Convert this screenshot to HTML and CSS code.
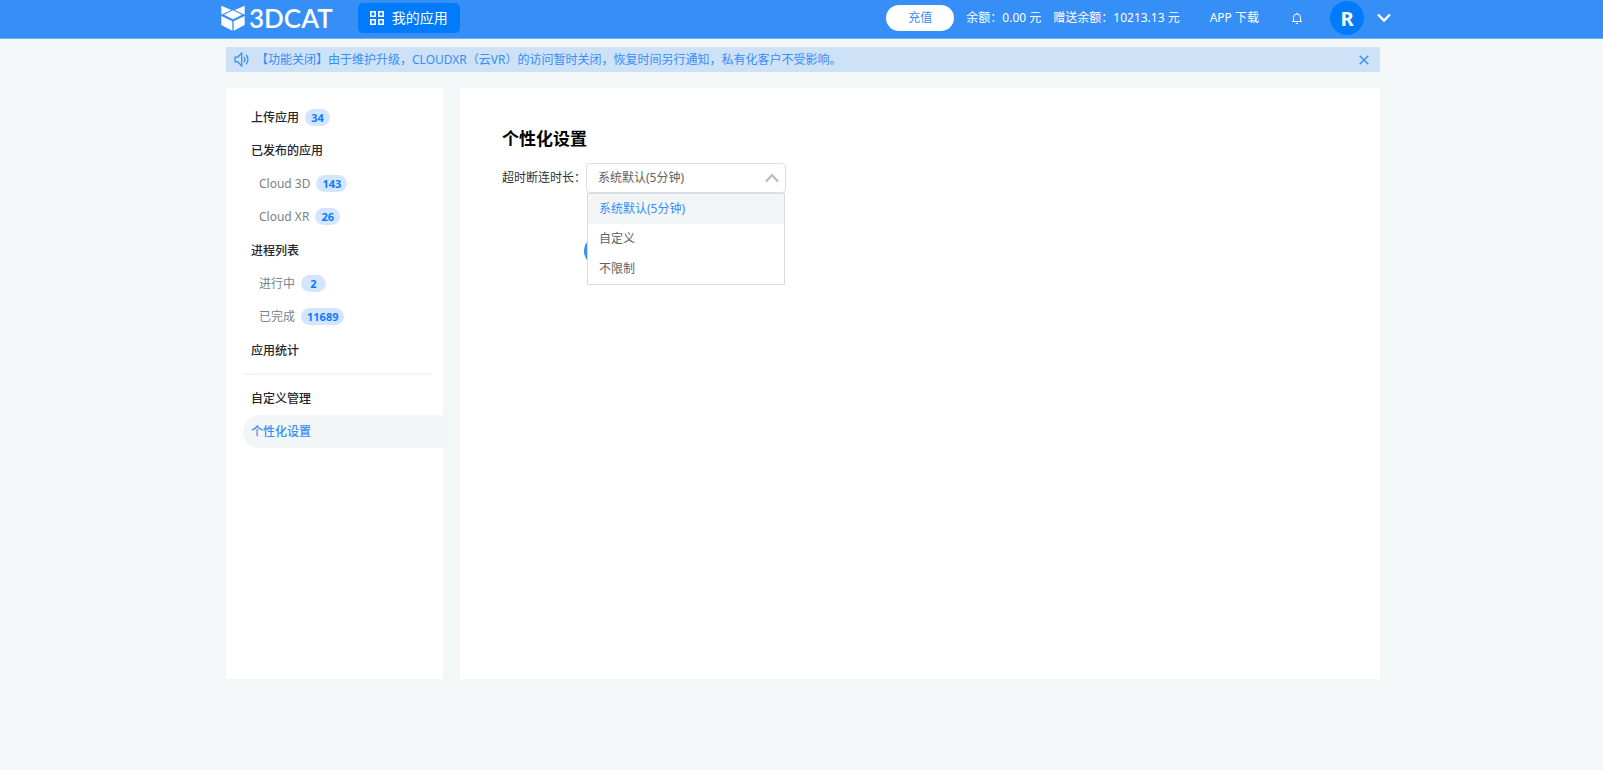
FILE: index.html
```html
<!DOCTYPE html>
<html lang="zh-CN">
<head>
<meta charset="utf-8">
<meta name="viewport" content="width=device-width, initial-scale=1">
<title>3DCAT</title>
<link rel="stylesheet" href="styles.css">
</head>
<body>
<header class="topbar">
  <a class="logo" href="#">
    <svg class="logo-mark" viewBox="0 0 72 78" aria-hidden="true">
      <path d="M1 2 31 15 1 29ZM71 2 41 15 71 29ZM36 16 63 29 36 43 9 29ZM1 33 34 49V77L1 60ZM71 33 38 49V77L71 60Z"/>
    </svg>
    <span>3DCAT</span>
  </a>
  <button class="apps" type="button">
    <svg class="apps-icon" viewBox="0 0 14 14" aria-hidden="true"><path d="M.8.8h4.4v4.4H.8zM8.8.8h4.4v4.4H8.8zM.8 8.8h4.4v4.4H.8zM8.8 8.8h4.4v4.4H8.8z"/></svg>
    我的应用
  </button>
  <div class="account">
    <button class="recharge" type="button">充值</button>
    <span class="balance">余额：0.00 元</span>
    <span class="bonus">赠送余额：10213.13 元</span>
    <a class="download" href="#">APP 下载</a>
    <button class="icon-button bell" type="button" aria-label="通知">
      <svg viewBox="0 0 12 12"><path d="M1 9.5h10M2.5 9.5V5.5a3.5 3.5 0 0 1 7 0v4M6 2V.8M5 11.3h2"/></svg>
    </button>
    <span class="avatar">R</span>
    <button class="icon-button more" type="button" aria-label="账户菜单">
      <svg viewBox="0 0 14 10"><path d="M1 1.5 7 7.5 13 1.5"/></svg>
    </button>
  </div>
</header>
<div class="page">
  <div class="notice">
    <svg class="speaker" viewBox="0 0 14 14" aria-hidden="true"><path d="M1 4.7h2.6L7.2 1v12L3.6 9.3H1zM9.2 4.6a3.6 3.6 0 0 1 0 4.8M11.2 2.6a6.4 6.4 0 0 1 0 8.8"/></svg>
    <p class="notice-text">【功能关闭】由于维护升级，CLOUDXR（云VR）的访问暂时关闭，恢复时间另行通知，私有化客户不受影响。</p>
    <button class="icon-button close" type="button" aria-label="关闭">
      <svg viewBox="0 0 10 10"><path d="M.7.7l8.6 8.6M9.3.7.7 9.3"/></svg>
    </button>
  </div>
  <div class="columns">
    <nav class="sidebar">
      <div class="group">
        <a class="item" href="#">上传应用<span class="badge">34</span></a>
        <a class="item" href="#">已发布的应用</a>
        <a class="item sub" href="#">Cloud 3D<span class="badge">143</span></a>
        <a class="item sub" href="#">Cloud XR<span class="badge">26</span></a>
      </div>
      <div class="group">
        <a class="item" href="#">进程列表</a>
        <a class="item sub" href="#">进行中<span class="badge">2</span></a>
        <a class="item sub" href="#">已完成<span class="badge">11689</span></a>
      </div>
      <div class="group">
        <a class="item" href="#">应用统计</a>
      </div>
      <hr class="divider">
      <div class="group">
        <a class="item" href="#">自定义管理</a>
        <a class="item active" href="#" aria-current="page">个性化设置</a>
      </div>
    </nav>
    <main class="content">
      <h1 class="title">个性化设置</h1>
      <form class="settings">
        <label class="label" for="timeout">超时断连时长：</label>
        <div class="picker">
          <select class="select" id="timeout">
            <option>系统默认(5分钟)</option>
            <option>自定义</option>
            <option>不限制</option>
          </select>
          <svg class="caret" viewBox="0 0 14 10" aria-hidden="true"><path d="M1 8.5 7 2l6 6.5"/></svg>
          <div class="menu">
            <button class="choice chosen" type="button">系统默认(5分钟)</button>
            <button class="choice" type="button">自定义</button>
            <button class="choice" type="button">不限制</button>
          </div>
        </div>
        <button class="save" type="submit" aria-label="保存"></button>
      </form>
    </main>
  </div>
</div>
</body>
</html>
```
FILE: styles.css
```css
* {
  box-sizing: border-box;
}

body {
  margin: 0;
  background: #fff;
  color: #303133;
  font: 12px/18px "Noto Sans", "Noto Sans CJK SC", sans-serif;
}

button,
select {
  margin: 0;
  padding: 0;
  border: 0;
  background: none;
  color: inherit;
  font: inherit;
  cursor: pointer;
}

a {
  color: inherit;
  text-decoration: none;
}

svg {
  display: block;
  fill: none;
  stroke: currentColor;
}

.topbar {
  display: flex;
  align-items: center;
  height: 39px;
  padding: 0 212px 3px 221px;
  border-bottom: 1px solid #6fb0fb;
  background: #368ef7;
  color: #fff;
  white-space: nowrap;
}

.logo {
  display: flex;
  align-items: center;
  gap: 4px;
  font: 600 26px/28px Lato, sans-serif;
}

.logo-mark {
  width: 24px;
  height: 26px;
  fill: #fff;
  stroke: none;
}

.apps {
  display: flex;
  align-items: center;
  gap: 8px;
  height: 30px;
  margin-left: 25px;
  padding: 0 12px;
  border-radius: 5px;
  background: #007bfb;
  font-size: 14px;
}

.apps-icon {
  width: 14px;
  height: 14px;
  stroke-width: 1.6;
}

.account {
  display: flex;
  align-items: center;
  margin-left: auto;
}

.recharge {
  width: 68px;
  height: 26px;
  border-radius: 13px;
  background: #fff;
  color: #368ef7;
}

.balance {
  margin-left: 12px;
}

.bonus {
  margin-left: 12px;
}

.download {
  margin-left: 30px;
}

.icon-button {
  display: block;
}

.bell {
  width: 12px;
  margin-left: 32px;
}

.avatar {
  width: 34px;
  height: 34px;
  margin-left: 27px;
  border-radius: 50%;
  background: #007bfb;
  font-size: 20px;
  font-weight: 700;
  line-height: 36px;
  text-align: center;
}

.more {
  width: 14px;
  margin-left: 13px;
  stroke-width: 2.4;
}

.page {
  min-height: calc(100vh - 44px);
  padding: 8px 223px 0 226px;
  background: #f3f7f8;
}

.notice {
  display: flex;
  align-items: center;
  height: 25px;
  padding: 0 11px 0 8px;
  background: #cde1f7;
  color: #368ef7;
}

.speaker {
  width: 15px;
  height: 15px;
  stroke-width: 1.2;
}

.notice-text {
  flex: 1;
  margin: 0 0 0 7px;
}

.close {
  width: 10px;
  stroke-width: 1.4;
}

.columns {
  display: grid;
  grid-template-columns: 217px 1fr;
  gap: 17px;
  min-height: calc(100vh - 184px);
  margin-top: 16px;
}

.sidebar {
  padding: 13px 0 0 17px;
  background: #fff;
}

.group + .group {
  margin-top: 1px;
}

.item {
  display: flex;
  align-items: center;
  gap: 6px;
  height: 33px;
  padding-left: 8px;
  color: #23272e;
  font-weight: 500;
}

.sub {
  padding-left: 16px;
  color: #7b7f86;
  font-weight: 400;
}

.badge {
  min-width: 25px;
  padding: 0 6px;
  border-radius: 9px;
  background: #d4e6ff;
  color: #0b7cff;
  font-size: 11px;
  font-weight: 700;
  line-height: 17px;
  text-align: center;
}

.active {
  border-radius: 17px 0 0 17px;
  background: #f2f6f7;
  color: #368ef7;
}

.divider {
  height: 2px;
  margin: 6px 12px 7px 0;
  border: 0;
  background: #f2f6f7;
}

.content {
  padding: 39px 42px;
  background: #fff;
}

.title {
  margin: 0 0 12px;
  color: #000;
  font-size: 17px;
  font-weight: 700;
  line-height: 24px;
}

.settings {
  display: grid;
  grid-template-columns: 84px 200px;
  align-items: center;
  row-gap: 43px;
}

.label {
  line-height: 20px;
}

.picker {
  position: relative;
}

.select {
  display: block;
  width: 100%;
  height: 30px;
  padding: 0 11px;
  border: 1px solid #dcdfe3;
  border-radius: 4px;
  background: #fff;
  color: #606266;
  appearance: none;
}

.caret {
  position: absolute;
  top: 10px;
  right: 7px;
  width: 14px;
  height: 10px;
  color: #b4bac2;
  stroke-width: 2;
  pointer-events: none;
}

.menu {
  position: absolute;
  top: 100%;
  right: 1px;
  left: 1px;
  z-index: 1;
  border: 1px solid #d8dbde;
  background: #fff;
}

.choice {
  display: block;
  width: 100%;
  height: 30px;
  padding: 0 11px;
  color: #606266;
  text-align: left;
}

.chosen {
  background: #f2f6f7;
  color: #368ef7;
}

.save {
  grid-column: 2;
  width: 68px;
  height: 30px;
  margin-left: -2px;
  border-radius: 15px;
  background: #368ef7;
}
```
